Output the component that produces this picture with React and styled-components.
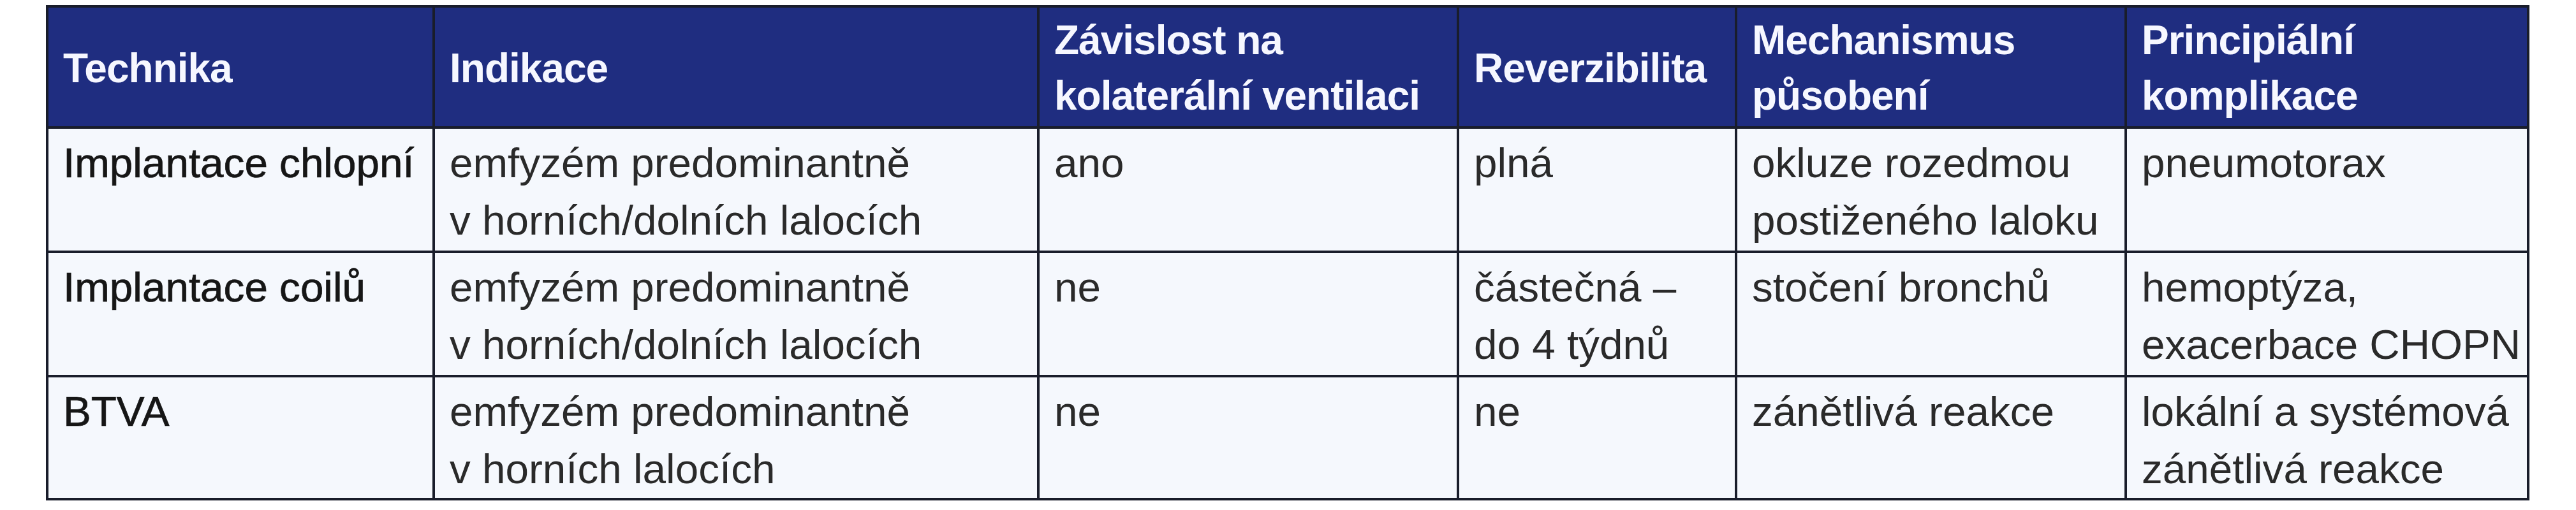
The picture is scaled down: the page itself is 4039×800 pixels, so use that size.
import React from "react";
import styled, { createGlobalStyle } from "styled-components";

const GlobalStyle = createGlobalStyle`
  html, body {
    margin: 0;
    padding: 0;
    background: #ffffff;
  }
  body {
    font-family: "Liberation Sans", Arial, sans-serif;
  }
`;

const Page = styled.div`
  padding: 8px 0 0 72px;
  width: 4039px;
  height: 800px;
  box-sizing: border-box;
  background: #ffffff;
`;

const Table = styled.div`
  display: inline-grid;
  grid-template-columns: 602px 944px 654px 432px 607px 627px;
  grid-template-rows: 186px 191px 191px 189px;
  gap: 4px;
  padding: 4px;
  background: #191d2b;
`;

const HeadCell = styled.div`
  display: flex;
  flex-direction: column;
  justify-content: center;
  padding: 4px 8px 0 23px;
  background: #1f2d80;
  color: #f6f7ff;
  font-family: "Liberation Sans", Arial, sans-serif;
  font-weight: 700;
  font-size: 64px;
  letter-spacing: -1px;
  line-height: 87px;
  white-space: nowrap;
  overflow: hidden;
`;

const BodyCell = styled.div`
  display: flex;
  flex-direction: column;
  justify-content: flex-start;
  padding: 9px 8px 0 23px;
  background: #f5f8fd;
  color: ${(p) => (p.$emphasis ? "#161616" : "#2a2a2a")};
  -webkit-text-stroke: ${(p) => (p.$emphasis ? "0.7px #161616" : "0")};
  font-family: "Liberation Sans", Arial, sans-serif;
  font-weight: 400;
  font-size: 65.6px;
  line-height: 90px;
  white-space: nowrap;
  overflow: hidden;
`;

const Line = styled.span`
  display: block;
`;

const headers = [
  ["Technika"],
  ["Indikace"],
  ["Závislost na", "kolaterální ventilaci"],
  ["Reverzibilita"],
  ["Mechanismus", "působení"],
  ["Principiální", "komplikace"],
];

const rows = [
  [
    ["Implantace chlopní"],
    ["emfyzém predominantně", "v horních/dolních lalocích"],
    ["ano"],
    ["plná"],
    ["okluze rozedmou", "postiženého laloku"],
    ["pneumotorax"],
  ],
  [
    ["Implantace coilů"],
    ["emfyzém predominantně", "v horních/dolních lalocích"],
    ["ne"],
    ["částečná –", "do 4 týdnů"],
    ["stočení bronchů"],
    ["hemoptýza,", "exacerbace CHOPN"],
  ],
  [
    ["BTVA"],
    ["emfyzém predominantně", "v horních lalocích"],
    ["ne"],
    ["ne"],
    ["zánětlivá reakce"],
    ["lokální a systémová", "zánětlivá reakce"],
  ],
];

export default function App() {
  return (
    <>
      <GlobalStyle />
      <Page>
        <Table role="table">
          {headers.map((lines, i) => (
            <HeadCell role="columnheader" key={`h${i}`}>
              {lines.map((l, j) => (
                <Line key={j}>{l}</Line>
              ))}
            </HeadCell>
          ))}
          {rows.map((row, r) =>
            row.map((lines, c) => (
              <BodyCell role="cell" key={`r${r}c${c}`} $emphasis={c === 0}>
                {lines.map((l, j) => (
                  <Line key={j}>{l}</Line>
                ))}
              </BodyCell>
            ))
          )}
        </Table>
      </Page>
    </>
  );
}
